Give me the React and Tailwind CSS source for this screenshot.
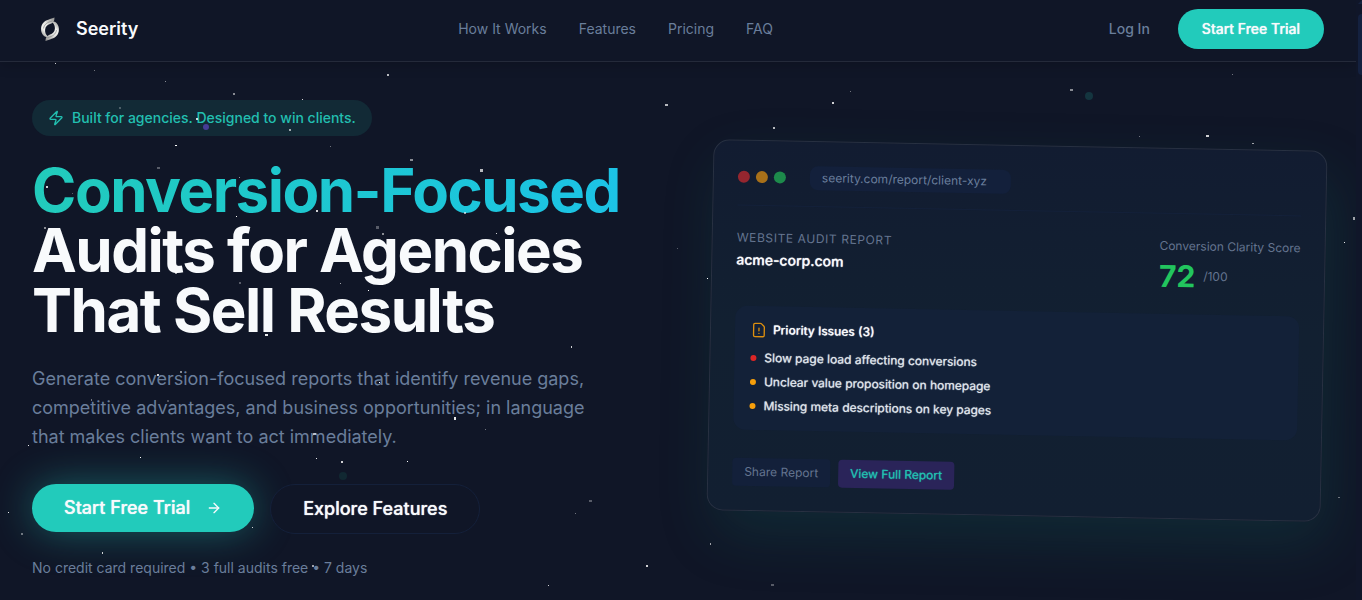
import { Zap, ArrowRight, FileWarning } from "lucide-react"

const navLinks = ["How It Works", "Features", "Pricing", "FAQ"]

const issues = [
    { text: "Slow page load affecting conversions", dot: "bg-[#dc2626]" },
    { text: "Unclear value proposition on homepage", dot: "bg-[#f59e0b]" },
    { text: "Missing meta descriptions on key pages", dot: "bg-[#f59e0b]" },
]

// x, y, width, height, opacity
const stars = [
    [55, 63, 1, 1, 0.8], [94, 70, 1, 1, 0.4], [165, 81, 1, 1, 0.5], [387, 74, 2, 2, 0.7],
    [233, 93, 2, 2, 0.5], [302, 99, 1, 1, 0.8], [119, 107, 2, 2, 0.25], [196, 118, 2, 2, 0.8],
    [289, 129, 2, 2, 0.6], [175, 145, 2, 1, 1], [330, 146, 1, 1, 0.4], [665, 104, 3, 2, 0.7],
    [850, 91, 1, 1, 0.4], [832, 102, 2, 2, 0.8], [773, 127, 2, 2, 0.7], [1070, 89, 3, 2, 0.5],
    [1232, 74, 1, 1, 0.4], [1139, 136, 1, 1, 0.4], [1206, 135, 3, 2, 0.8], [1252, 143, 2, 1, 0.6],
    [157, 167, 3, 2, 0.3], [46, 186, 2, 2, 0.8], [72, 193, 1, 1, 0.3], [239, 177, 1, 1, 0.5],
    [316, 210, 2, 2, 0.8], [236, 216, 1, 1, 1], [44, 227, 2, 2, 0.5], [239, 282, 2, 2, 0.3],
    [265, 334, 3, 2, 0.9], [175, 272, 2, 2, 0.6], [410, 159, 3, 2, 0.5], [480, 169, 3, 3, 0.7],
    [464, 212, 2, 2, 0.6], [376, 226, 3, 3, 0.3], [382, 233, 2, 2, 0.5], [496, 233, 1, 1, 0.8],
    [340, 283, 1, 1, 0.6], [368, 290, 1, 1, 1], [571, 346, 1, 2, 0.8], [157, 374, 2, 2, 0.8],
    [180, 371, 2, 2, 0.5], [91, 399, 1, 2, 0.4], [167, 400, 2, 2, 0.25], [28, 445, 1, 1, 0.9],
    [140, 457, 1, 1, 1], [313, 433, 3, 2, 0.6], [316, 458, 1, 1, 0.9], [8, 512, 1, 1, 0.9],
    [21, 533, 2, 2, 0.4], [252, 527, 1, 1, 0.8], [102, 552, 1, 2, 0.8], [312, 565, 2, 2, 0.6],
    [379, 382, 1, 1, 1], [454, 417, 2, 3, 0.9], [485, 429, 1, 1, 0.4], [341, 461, 2, 2, 0.8],
    [407, 461, 1, 1, 1], [589, 500, 3, 2, 0.3], [575, 513, 1, 1, 0.4], [646, 565, 2, 2, 0.8],
    [548, 585, 1, 1, 0.8], [677, 248, 1, 1, 0.3], [707, 278, 1, 1, 1], [1353, 217, 2, 3, 0.6],
    [1344, 242, 1, 1, 0.9], [1338, 497, 2, 1, 0.4], [710, 543, 1, 2, 0.6], [771, 584, 3, 2, 0.3],
]

const Starfield = () => (
    <div aria-hidden="true" className="pointer-events-none absolute inset-0 z-10">
        {stars.map(([x, y, width, height, opacity]) => (
            <span
                key={`${x}-${y}`}
                className="absolute bg-white"
                style={{ left: x, top: y, width, height, opacity }}
            />
        ))}
        <span className="absolute left-[203px] top-[124px] size-[6px] rounded-full bg-[#463c96]" />
        <span className="absolute left-[1085px] top-[92px] size-[8px] rounded-full bg-[#14353f]" />
        <span className="absolute left-[339px] top-[472px] size-[8px] rounded-full bg-[#112832]" />
    </div>
)

const Logo = () => (
    <svg viewBox="0 0 36 36" className="size-9" aria-hidden="true">
        <defs>
            <linearGradient id="blade" x1="0.8" y1="0" x2="0.2" y2="1">
                <stop offset="0" stopColor="#9a9a98" />
                <stop offset="0.4" stopColor="#e4e4e1" />
                <stop offset="0.7" stopColor="#f4f4f1" />
                <stop offset="1" stopColor="#a3a3a0" />
            </linearGradient>
            <path
                id="swirl"
                d="M22.500 6.500C19 8.300 13.500 8.400 10.700 12.500C8 16.500 8.600 22.300 12.300 25.300C13.500 26.100 14.800 26.200 16 25.700C13.700 23.800 12.900 21.300 13.100 18.800C13.400 15.600 15.400 13.900 18 13.100C20.800 12.200 22.700 10 22.500 6.500Z"
            />
        </defs>
        <g fill="url(#blade)">
            <use href="#swirl" />
            <use href="#swirl" transform="rotate(180 18 18.300)" />
        </g>
        <g fill="none" stroke="#77787a" strokeWidth="0.6">
            <path d="M20.500 10C15.500 11 12 13.500 11.500 17.500" />
            <path d="M15.500 26.600C20.500 25.600 24 23.100 24.500 19.100" />
        </g>
    </svg>
)

const Header = () => (
    <header className="flex items-center justify-between border-b border-[#242a3a] px-8 pt-[9px] pb-3 shadow-[0_4px_12px_rgba(0,0,0,0.15)]">
        <a href="#" className="flex items-center gap-2">
            <Logo />
            <span className="text-lg font-semibold text-[#f8fafc]">Seerity</span>
        </a>

        <nav className="flex items-center gap-8">
            {navLinks.map((link) => (
                <a key={link} href="#" className="text-sm text-[#6a7e9b]">
                    {link}
                </a>
            ))}
        </nav>

        <div className="flex items-center gap-3">
            <a href="#" className="px-4 py-2 text-sm font-medium text-[#6a7e9b]">Log In</a>
            <button className="h-10 rounded-full bg-[#22cbbb] px-6 text-sm font-medium text-[#f8fafc] [text-shadow:0_0_1px_currentColor]">
                Start Free Trial
            </button>
        </div>
    </header>
)

const HeroText = () => (
    <div>
        {/* Badge */}
        <div className="inline-flex items-center gap-2 rounded-full bg-[#122a36] px-4 py-2 text-sm font-medium text-[#22bfb0]">
            <Zap className="size-4" />
            Built for agencies. Designed to win clients.
        </div>

        <h1 className="mt-6 text-[60px] leading-[60px] font-bold tracking-tight text-[#f8fafc]">
            <span className="block w-fit bg-linear-to-r from-[#22cbbb] to-[#1cc3e6] bg-clip-text text-transparent">
                Conversion-Focused
            </span>
            <span className="block">Audits for Agencies</span>
            <span className="block">That Sell Results</span>
        </h1>

        <p className="mt-6 max-w-xl text-lg leading-[29px] text-[#6a7e9b]">
            Generate conversion-focused reports that identify revenue gaps, competitive
            advantages, and business opportunities; in language that makes clients want to
            act immediately.
        </p>

        {/* Actions */}
        <div className="mt-[33px] flex items-start gap-4">
            <button className="flex h-12 items-center gap-4 rounded-full bg-[#22cbbb] px-8 text-lg font-medium text-[#f8fafc] shadow-[0_0_40px_rgba(34,203,187,0.4)] [text-shadow:0_0_1px_currentColor]">
                Start Free Trial
                <ArrowRight className="size-4" />
            </button>
            <button className="h-[50px] rounded-full border border-[#14203a] bg-[#101627] px-8 text-lg font-medium text-[#f8fafc] [text-shadow:0_0_1px_currentColor]">
                Explore Features
            </button>
        </div>

        <p className="mt-6 text-sm text-[#6a7e9b]">
            No credit card required • 3 full audits free • 7 days
        </p>
    </div>
)

const ReportCard = () => (
    <div className="rotate-[1.1deg] rounded-2xl border border-[#283142] bg-linear-to-b from-[#121c31] via-[#122031] to-[#121f31] p-6 text-xs shadow-[8px_24px_56px_rgba(16,110,100,0.22)]">
        {/* Browser bar */}
        <div className="flex items-center gap-6 border-b border-[#14213a] pb-4">
            <div className="flex gap-[6px]">
                <span className="size-3 rounded-full bg-[#95262f]" />
                <span className="size-3 rounded-full bg-[#a87019]" />
                <span className="size-3 rounded-full bg-[#1d8a4b]" />
            </div>
            <div className="w-[201px] rounded-lg bg-[#13203b] px-3 py-1 text-[#6a7e9b]">
                seerity.com/report/client-xyz
            </div>
        </div>

        {/* Report heading */}
        <div className="mt-6 flex items-start justify-between">
            <div>
                <p className="tracking-wider text-[#64748f] uppercase">Website Audit Report</p>
                <p className="mt-1 text-sm font-medium text-[#f8fafc] [text-shadow:0_0_1px_currentColor]">acme-corp.com</p>
            </div>
            <div>
                <p className="text-[#64748f]">Conversion Clarity Score</p>
                <div className="mt-1 flex items-center gap-2">
                    <span className="text-3xl font-bold text-[#22c55e]">72</span>
                    <span className="text-[#64748f]">/100</span>
                </div>
            </div>
        </div>

        {/* Issues */}
        <div className="mt-5 rounded-xl bg-[#132138] p-4 [text-shadow:0_0_1px_currentColor]">
            <div className="flex items-center gap-[6px] font-medium text-[#f8fafc]">
                <FileWarning className="size-4 text-[#dd8f0e]" />
                Priority Issues (3)
            </div>
            <ul className="mt-3 space-y-2 text-[#dfe4ea]">
                {issues.map((issue) => (
                    <li key={issue.text} className="flex items-center gap-2">
                        <span className={`size-[6px] rounded-full ${issue.dot}`} />
                        {issue.text}
                    </li>
                ))}
            </ul>
        </div>

        <div className="mt-7 flex gap-2">
            <button className="h-7 rounded-sm bg-[#13203a] px-3 text-[#64748f]">Share Report</button>
            <button className="h-7 rounded-sm bg-[#2a2459] px-3 text-[#22bfb0] [text-shadow:0_0_1px_currentColor]">
                View Full Report
            </button>
        </div>
    </div>
)

const App = () => (
    <div className="flex min-h-screen bg-[#101627] font-['Inter',sans-serif]">
        <div className="relative min-w-0 flex-1 overflow-hidden">
            <Header />
            <main className="grid grid-cols-2 items-center gap-16 px-8 pt-[38px] pb-[22px]">
                <HeroText />
                <div className="pb-[18px]">
                    <ReportCard />
                </div>
            </main>
            <Starfield />
        </div>

        {/* Scroll track */}
        <div aria-hidden="true" className="w-[6px] shrink-0 bg-[#101629] pl-[2px]">
            <svg viewBox="0 0 4 4" className="size-1">
                <path d="M0 4L4 0V4Z" fill="#16233f" />
            </svg>
            <div className="mt-[10px] h-[61px] rounded-l-sm bg-[#14213f]" />
        </div>
    </div>
)

export default App
